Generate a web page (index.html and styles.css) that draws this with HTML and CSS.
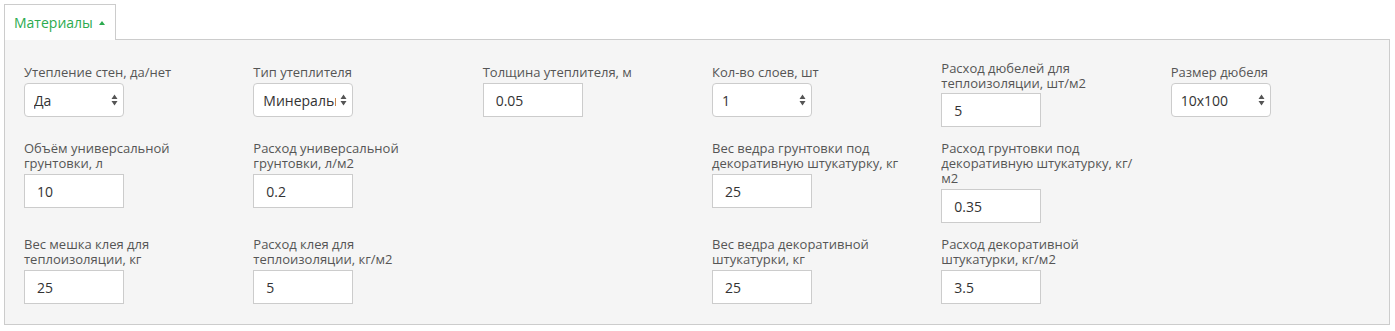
FILE: index.html
```html
<!DOCTYPE html>
<html lang="ru">
<head>
<meta charset="utf-8">
<title>Материалы</title>
<link rel="stylesheet" href="styles.css">
</head>
<body>
<div class="page">
  <div class="tabs">
    <div class="tab"><span class="tab-title">Материалы</span><span class="caret"></span></div>
  </div>
  <div class="panel">
    <div class="grid">
      <div class="field field--single">
        <label>Утепление стен, да/нет</label>
        <div class="select"><select><option>Да</option></select><svg class="arrows" width="7" height="12" viewBox="0 0 7 12"><path d="M3.5 0.5 L6.5 5 H0.5 Z M3.5 11.5 L6.5 7 H0.5 Z" fill="#555"/></svg></div>
      </div>
      <div class="field field--single">
        <label>Тип утеплителя</label>
        <div class="select"><select><option>Минеральная вата</option></select><svg class="arrows" width="7" height="12" viewBox="0 0 7 12"><path d="M3.5 0.5 L6.5 5 H0.5 Z M3.5 11.5 L6.5 7 H0.5 Z" fill="#555"/></svg></div>
      </div>
      <div class="field field--single">
        <label>Толщина утеплителя, м</label>
        <input class="input" type="text" value="0.05">
      </div>
      <div class="field field--single">
        <label>Кол-во слоев, шт</label>
        <div class="select"><select><option>1</option></select><svg class="arrows" width="7" height="12" viewBox="0 0 7 12"><path d="M3.5 0.5 L6.5 5 H0.5 Z M3.5 11.5 L6.5 7 H0.5 Z" fill="#555"/></svg></div>
      </div>
      <div class="field field--double">
        <label>Расход дюбелей для теплоизоляции, шт/м2</label>
        <input class="input" type="text" value="5">
      </div>
      <div class="field field--single">
        <label>Размер дюбеля</label>
        <div class="select"><select><option>10x100</option></select><svg class="arrows" width="7" height="12" viewBox="0 0 7 12"><path d="M3.5 0.5 L6.5 5 H0.5 Z M3.5 11.5 L6.5 7 H0.5 Z" fill="#555"/></svg></div>
      </div>

      <div class="field">
        <label>Объём универсальной грунтовки, л</label>
        <input class="input" type="text" value="10">
      </div>
      <div class="field">
        <label>Расход универсальной грунтовки, л/м2</label>
        <input class="input" type="text" value="0.2">
      </div>
      <div class="field"></div>
      <div class="field">
        <label>Вес ведра грунтовки под декоративную штукатурку, кг</label>
        <input class="input" type="text" value="25">
      </div>
      <div class="field">
        <label>Расход грунтовки под декоративную штукатурку, кг/м2</label>
        <input class="input" type="text" value="0.35">
      </div>
      <div class="field"></div>

      <div class="field">
        <label>Вес мешка клея для теплоизоляции, кг</label>
        <input class="input" type="text" value="25">
      </div>
      <div class="field">
        <label>Расход клея для теплоизоляции, кг/м2</label>
        <input class="input" type="text" value="5">
      </div>
      <div class="field"></div>
      <div class="field">
        <label>Вес ведра декоративной штукатурки, кг</label>
        <input class="input" type="text" value="25">
      </div>
      <div class="field">
        <label>Расход декоративной штукатурки, кг/м2</label>
        <input class="input" type="text" value="3.5">
      </div>
      <div class="field"></div>
    </div>
  </div>
</div>
</body>
</html>
```
FILE: styles.css
```css
* { box-sizing: border-box; }

html, body {
  margin: 0;
  padding: 0;
  background: #fff;
}

body {
  font-family: "Open Sans", "Liberation Sans", sans-serif;
  color: #333;
}

.page {
  padding: 4px 5px 0 4px;
}

.tabs {
  display: flex;
}

.tab {
  position: relative;
  z-index: 1;
  display: flex;
  align-items: center;
  height: 36px;
  margin-bottom: -1px;
  padding: 0 10px 1px 9px;
  background: #fff;
  border: 1px solid #ccc;
  border-bottom: none;
  color: #2bab4f;
  font-size: 14px;
}

.caret {
  width: 0;
  height: 0;
  margin-left: 6px;
  margin-top: 1px;
  border-left: 3.5px solid transparent;
  border-right: 3.5px solid transparent;
  border-bottom: 4px solid #2bab4f;
}

.panel {
  background: #f5f5f5;
  border: 1px solid #ccc;
  padding: 21px 4px 20px 4px;
}

.grid {
  display: grid;
  grid-template-columns: repeat(6, 1fr);
  row-gap: 14px;
  align-items: start;
}

.field {
  padding: 0 15px;
  min-width: 0;
}

.field--single {
  padding-top: 4px;
}

.field label {
  display: block;
  font-size: 13px;
  line-height: 15px;
  color: #555;
  margin-bottom: 3px;
}

.field--double label {
  margin-bottom: 2px;
}

.input {
  display: block;
  width: 100px;
  height: 34px;
  margin: 0;
  padding: 0 12px;
  border: 1px solid #ccc;
  border-radius: 0;
  background: #fff;
  font-family: inherit;
  font-size: 14px;
  color: #333;
  outline: none;
}

.select {
  position: relative;
  width: 100px;
  height: 34px;
}

.select select {
  display: block;
  width: 100%;
  height: 34px;
  margin: 0;
  padding: 0 16px 0 9px;
  border: 1px solid #ccc;
  border-radius: 4px;
  background: #fff;
  font-family: inherit;
  font-size: 14px;
  color: #333;
  -webkit-appearance: none;
  appearance: none;
  outline: none;
}

.arrows {
  position: absolute;
  right: 6px;
  top: 11px;
  pointer-events: none;
}
```
